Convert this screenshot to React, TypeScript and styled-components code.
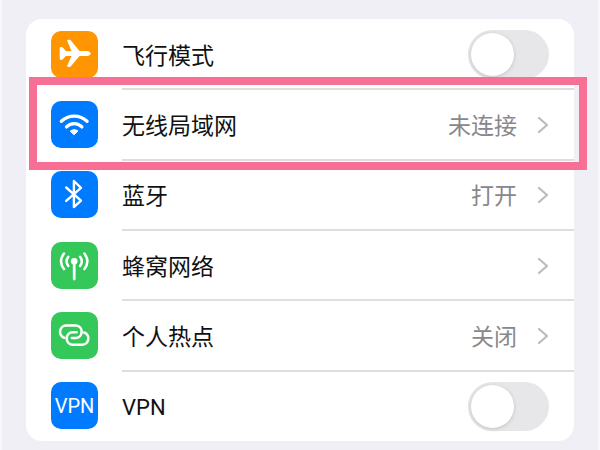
import React from "react";
import styled, { createGlobalStyle, css } from "styled-components";

const GlobalStyle = createGlobalStyle`
  * { box-sizing: border-box; }
  body {
    margin: 0;
    background: #f0eff5;
    font-family: Roboto, "Noto Sans CJK SC", sans-serif;
    color: #111;
  }
`;

const Page = styled.main`
  display: flex;
  min-height: 100vh;
  padding: 19px 24px 9px;
  border: solid #f7f7fb;
  border-width: 0 2px;
`;

const Card = styled.ul`
  flex: 1;
  display: grid;
  grid-auto-rows: minmax(70px, 1fr);
  margin: 0;
  padding: 0;
  list-style: none;
  background: #fff;
  border-radius: 16px;
`;

const Row = styled.li<{ $highlighted?: boolean }>`
  position: relative;
  display: flex;

  ${(p) =>
    p.$highlighted &&
    css`
      &::after {
        content: "";
        position: absolute;
        z-index: 1;
        inset: -12px -13px -10px 3px;
        border: 8px solid #f86f96;
        pointer-events: none;
      }
    `}
`;

const rowLayout = css`
  flex: 1;
  display: flex;
  align-items: center;
  gap: 24px;
  padding-left: 25px;
  color: inherit;
  text-decoration: none;
`;

const RowLink = styled.a`
  ${rowLayout}
`;

const RowLabel = styled.label`
  ${rowLayout}
`;

const Tile = styled.span<{ $color: string }>`
  flex: none;
  display: grid;
  place-items: center;
  width: 47px;
  height: 47px;
  border-radius: 10px;
  background: ${(p) => p.$color};
  color: #fff;
  font-size: 20px;
`;

const Content = styled.span<{ $divided: boolean }>`
  flex: 1;
  align-self: stretch;
  display: flex;
  align-items: center;
  margin-bottom: -1px;
  padding: 2px 25px 0 0;
  border-bottom: 2px solid ${(p) => (p.$divided ? "#dededf" : "transparent")};
  font-size: 23px;
  line-height: 32px;
`;

const Title = styled.span<{ $latin?: boolean }>`
  flex: 1;
  padding-top: 4px;
  font-size: ${(p) => (p.$latin ? "22px" : "inherit")};
`;

const Value = styled.span`
  padding-top: 4px;
  color: #88888c;
`;

const Chevron = styled.svg`
  width: 12px;
  height: 18px;
  margin-left: 20px;
  fill: none;
  stroke: #bcbcc0;
  stroke-width: 2.2;
  stroke-linecap: round;
  stroke-linejoin: round;
`;

const Switch = styled.input`
  appearance: none;
  display: flex;
  width: 81px;
  height: 49px;
  margin: 0;
  padding: 3px;
  border-radius: 25px;
  background: #e7e7e9;

  &::before {
    content: "";
    width: 43px;
    height: 43px;
    border-radius: 50%;
    background: #fff;
    box-shadow: 0 1px 4px rgba(0, 0, 0, 0.16);
  }

  &:checked {
    justify-content: flex-end;
    background: #34c759;
  }
`;

const Glyph = styled.svg`
  width: 47px;
  height: 47px;
  fill: none;
  stroke: #fff;
  stroke-linecap: round;
  stroke-linejoin: round;
`;

const Airplane = () => (
  <Glyph viewBox="0 0 47 47" aria-hidden="true">
    <path
      fill="#fff"
      stroke="none"
      d="M9.6 16h1q.7 0 1.200.6l3 3.300h5.700L16.300 10.200q-.4-1.400.9-1.400h1.500q.7 0 1.200.7l8.600 10.400h7.200c2.400 0 4 1.400 4 2.500s-1.600 2.500-4 2.500h-7.200L19.900 35.300q-.5.7-1.200.7h-1.500q-1.300 0-.9-1.400l4.200-9.700h-5.700l-3 3.300q-.5.6-1.200.6h-1q-.9 0-.9-1V17q0-1 .9-1z"
    />
  </Glyph>
);

const Wifi = () => (
  <Glyph viewBox="0 0 47 47" strokeWidth="3.3" strokeLinecap="butt" aria-hidden="true">
    <path d="M10.3 20.300A18.600 18.600 0 0 1 36.100 20.300" />
    <path d="M15.500 25.900A10.500 10.500 0 0 1 30.900 25.900" />
    <path
      fill="#fff"
      strokeWidth="1"
      d="M19.400 29.900Q23.200 27.200 27 29.900L23.200 33.600z"
    />
  </Glyph>
);

const Bluetooth = () => (
  <Glyph viewBox="0 0 47 47" strokeWidth="2.4" aria-hidden="true">
    <path d="M15.200 16.500 30 29.600 22.900 36V10L30 16.800 15.200 29.900" />
  </Glyph>
);

const Cellular = () => (
  <Glyph viewBox="0 0 47 47" strokeWidth="2.5" aria-hidden="true">
    <circle cx="23.200" cy="19.300" r="3.300" fill="#fff" stroke="none" />
    <path strokeWidth="2.800" d="M23.200 20V37" />
    <path d="M17.300 14.700Q13.800 19.300 17.300 24M29.100 14.700Q32.600 19.300 29.100 24" />
    <path d="M13 11.500Q7 19.300 13 27.100M33.400 11.500Q39.400 19.300 33.400 27.100" />
  </Glyph>
);

const Hotspot = () => (
  <Glyph viewBox="0 0 47 47" strokeWidth="2.6" aria-hidden="true">
    <path d="M13.200 25.700A6.300 6.300 0 0 1 15.900 13.500H25.200A6.300 6.300 0 0 1 25.200 26H20.800" />
    <path d="M33.200 20.500A6.300 6.300 0 0 1 30.500 32.700H21.200A6.300 6.300 0 0 1 21.200 20.200H25.600" />
  </Glyph>
);

const BLUE = "#007aff";
const GREEN = "#34c759";
const ORANGE = "#ff9500";

type Item = {
  id: string;
  title: string;
  color: string;
  icon: React.ReactNode;
  value?: string;
  toggle?: boolean;
  latin?: boolean;
  highlighted?: boolean;
};

const items: Item[] = [
  { id: "airplane", title: "飞行模式", color: ORANGE, icon: <Airplane />, toggle: true },
  { id: "wlan", title: "无线局域网", color: BLUE, icon: <Wifi />, value: "未连接", highlighted: true },
  { id: "bluetooth", title: "蓝牙", color: BLUE, icon: <Bluetooth />, value: "打开" },
  { id: "cellular", title: "蜂窝网络", color: GREEN, icon: <Cellular /> },
  { id: "hotspot", title: "个人热点", color: GREEN, icon: <Hotspot />, value: "关闭" },
  { id: "vpn", title: "VPN", color: BLUE, icon: "VPN", toggle: true, latin: true },
];

export default function App() {
  return (
    <>
      <GlobalStyle />
      <Page lang="zh-CN">
        <Card>
          {items.map((item, index) => {
            const body = (
              <>
                <Tile $color={item.color}>{item.icon}</Tile>
                <Content $divided={index < items.length - 1}>
                  <Title $latin={item.latin}>{item.title}</Title>
                  {item.value && <Value>{item.value}</Value>}
                  {item.toggle ? (
                    <Switch type="checkbox" role="switch" id={item.id} />
                  ) : (
                    <Chevron viewBox="0 0 12 18" aria-hidden="true">
                      <path d="M2 2 10 9 2 16" />
                    </Chevron>
                  )}
                </Content>
              </>
            );
            return (
              <Row key={item.id} $highlighted={item.highlighted}>
                {item.toggle ? (
                  <RowLabel htmlFor={item.id}>{body}</RowLabel>
                ) : (
                  <RowLink href={`#${item.id}`}>{body}</RowLink>
                )}
              </Row>
            );
          })}
        </Card>
      </Page>
    </>
  );
}
